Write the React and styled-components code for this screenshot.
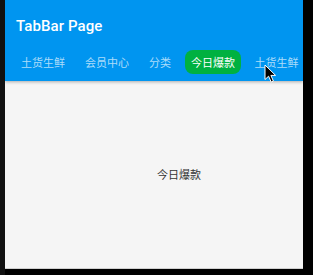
import React from "react";
import styled, { createGlobalStyle } from "styled-components";

const GlobalStyle = createGlobalStyle`
  html, body {
    margin: 0;
    padding: 0;
    background: #000;
  }
  body {
    font-family: Roboto, "Noto Sans CJK SC", sans-serif;
  }
`;

const Window = styled.div`
  width: 313px;
  height: 275px;
  display: flex;
  background: #000;
  border-left: 5px solid #111;
  box-sizing: border-box;
  position: relative;
`;

const Screen = styled.div`
  width: 298px;
  height: 269px;
  display: flex;
  flex-direction: column;
  background: #f5f5f5;
  border-bottom: 1px solid #cfcfcf;
  box-sizing: border-box;
  overflow: hidden;
`;

const AppBar = styled.header`
  height: 81px;
  background: #0095f0;
  display: flex;
  flex-direction: column;
  box-shadow: 0 1px 3px rgba(0, 0, 0, 0.3);
  position: relative;
  z-index: 1;
`;

const Title = styled.h1`
  margin: 0;
  height: 50px;
  padding: 17px 0 0 11px;
  box-sizing: border-box;
  font-size: 15px;
  font-weight: 500;
  color: #fff;
  letter-spacing: 0.1px;
`;

const TabStrip = styled.div`
  display: flex;
  align-items: center;
  height: 24px;
  padding-left: 6px;
  white-space: nowrap;
`;

const Tab = styled.div`
  padding: 0 10px;
  font-family: "Noto Sans CJK SC", sans-serif;
  font-size: 11px;
  line-height: 24px;
  color: rgba(255, 255, 255, 0.68);
`;

const ActiveTab = styled.div`
  margin: 0 4px 0 4px;
  padding: 0 5.5px 0 6px;
  height: 24px;
  border-radius: 8px;
  background: #00b140;
  font-family: "Noto Sans CJK SC", sans-serif;
  font-size: 11px;
  line-height: 24px;
  color: #fff;
`;

const Body = styled.main`
  flex: 1;
  display: flex;
  align-items: center;
  justify-content: center;
  padding: 0 0 2px 50px;
`;

const PageText = styled.span`
  font-family: "Noto Sans CJK SC", sans-serif;
  font-size: 11px;
  color: #333;
`;

const Cursor = styled.svg`
  position: absolute;
  left: 259px;
  top: 64px;
  z-index: 5;
`;

const tabs = ["土货生鲜", "会员中心", "分类", "今日爆款", "土货生鲜"];
const active = 3;

export default function App() {
  return (
    <>
      <GlobalStyle />
      <Window>
        <Screen>
          <AppBar>
            <Title>TabBar Page</Title>
            <TabStrip>
              {tabs.map((t, i) =>
                i === active ? (
                  <ActiveTab key={i}>{t}</ActiveTab>
                ) : (
                  <Tab key={i}>{t}</Tab>
                )
              )}
            </TabStrip>
          </AppBar>
          <Body>
            <PageText>{tabs[active]}</PageText>
          </Body>
        </Screen>
        <Cursor width="13" height="19" viewBox="0 0 13 19">
          <path
            d="M1 1 L1 15.5 L4.6 12.2 L7.2 18 L9.4 17 L6.9 11.4 L11.6 11.4 Z"
            fill="#000"
            stroke="#fff"
            strokeWidth="1"
            strokeLinejoin="round"
          />
        </Cursor>
      </Window>
    </>
  );
}
